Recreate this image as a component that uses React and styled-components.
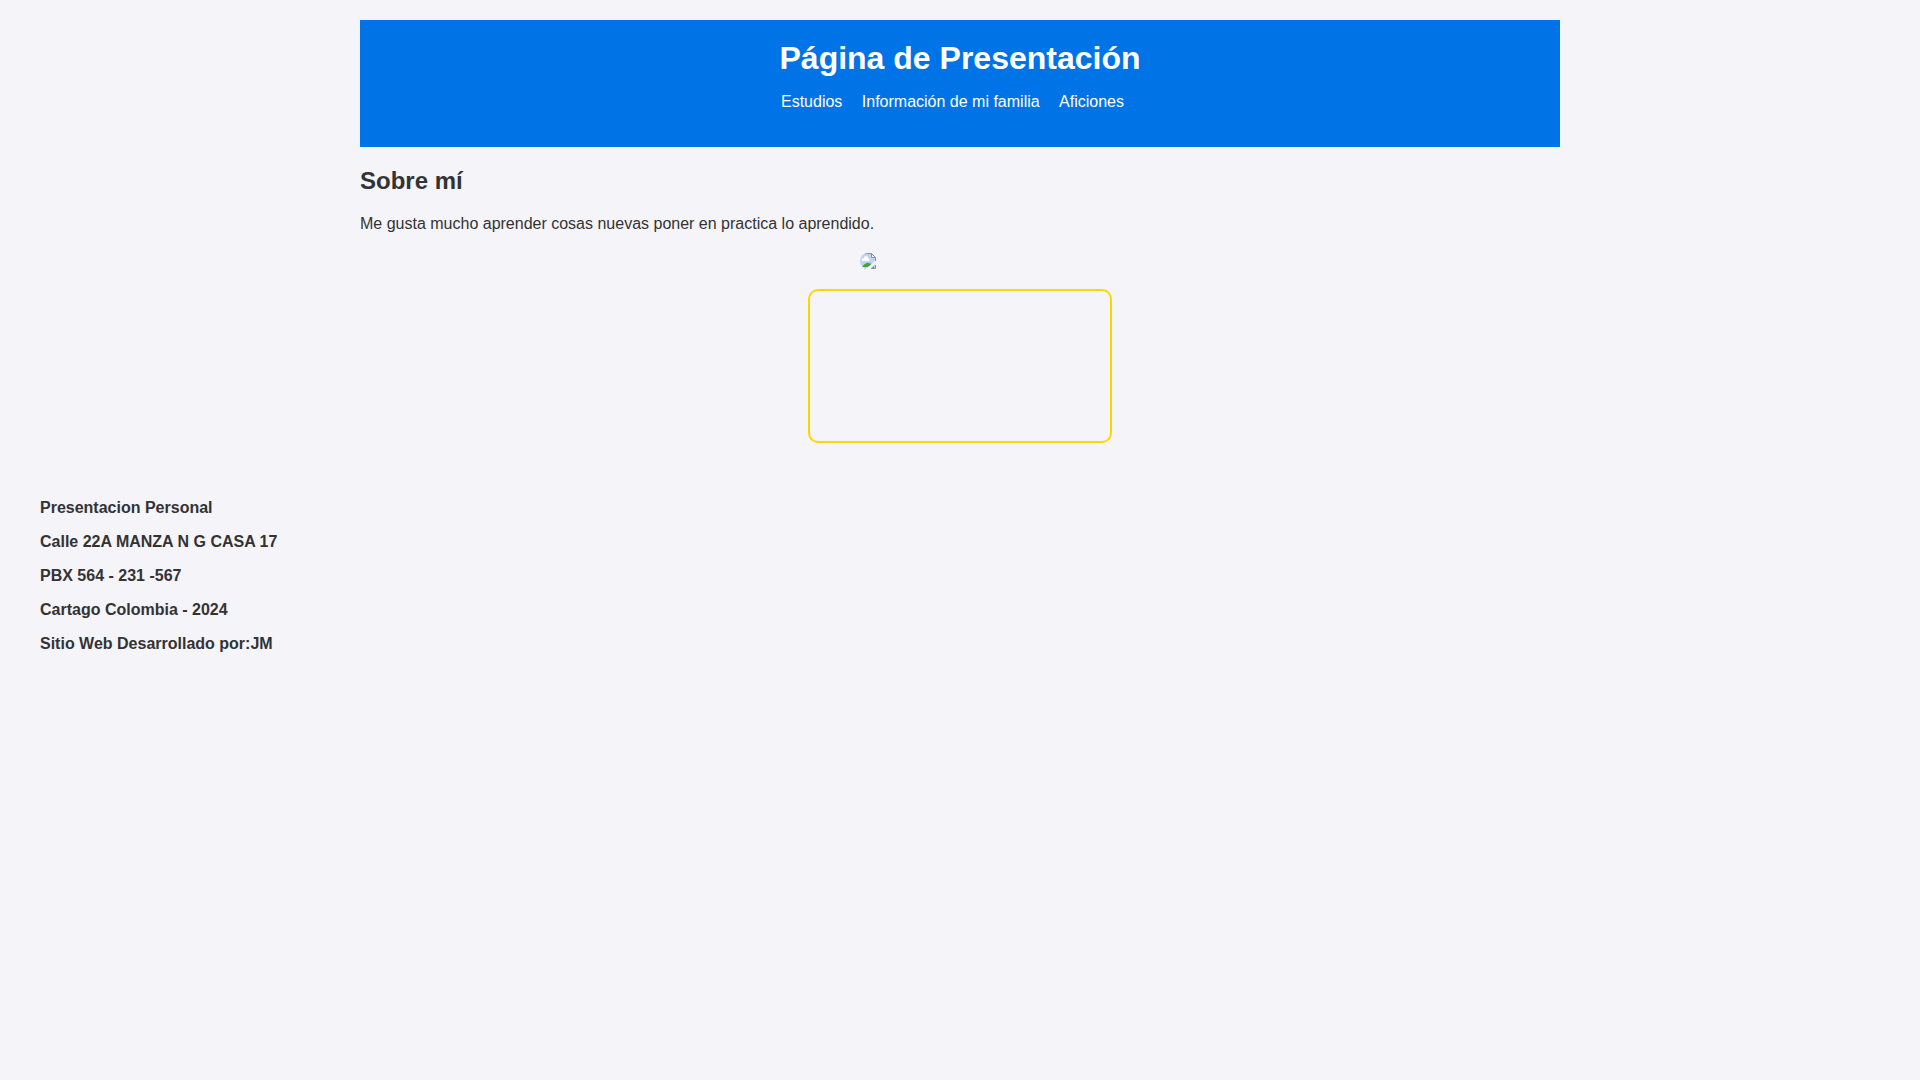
import React from "react";
import styled, { createGlobalStyle } from "styled-components";

const GlobalStyle = createGlobalStyle`
  body {
    margin: 0;
    background: #f4f4f9;
    color: #333;
    font-family: Arial, "Liberation Sans", sans-serif;
    font-size: 16px;
  }
`;

const Container = styled.div`
  max-width: 1200px;
  margin: 0 auto;
  padding: 20px;
`;

const Header = styled.header`
  background: #0073e6;
  color: #fff;
  padding: 20px;
  text-align: center;
`;

const Title = styled.h1`
  margin: 0;
  font-size: 32px;
  line-height: 36px;
`;

const NavList = styled.ul`
  list-style: none;
  margin: 16px 0;
  padding: 0;
  line-height: 19px;
`;

const NavItem = styled.li`
  display: inline;
  margin-right: 15px;
`;

const NavLink = styled.a`
  color: #fff;
  text-decoration: none;
`;

const Heading = styled.h2`
  margin: 20px 0;
  font-size: 24px;
  line-height: 28px;
`;

const Text = styled.p`
  margin: 0 0 20px;
  line-height: 18px;
`;

const Photo = styled.div`
  width: 200px;
  height: 16px;
  margin: 0 auto 20px;
  border-radius: 8px;
  overflow: hidden;
`;

const MissingImage = styled.svg`
  display: block;
`;

const VideoFrame = styled.section`
  box-sizing: border-box;
  width: 304px;
  height: 154px;
  margin: 0 auto;
  border: 2px solid #ffd700;
  border-radius: 10px;
`;

const Footer = styled.footer`
  padding: 20px 40px;
  font-weight: bold;
`;

const FooterLine = styled.p`
  margin: 16px 0;
  line-height: 18px;
`;

const links = ["Estudios", "Información de mi familia", "Aficiones"];
const details = [
  "Presentacion Personal",
  "Calle 22A MANZA N G CASA 17",
  "PBX 564 - 231 -567",
  "Cartago Colombia - 2024",
  "Sitio Web Desarrollado por:JM",
];

export default function App() {
  return (
    <>
      <GlobalStyle />
      <Container>
        <Header>
          <Title>Página de Presentación</Title>
          <nav>
            <NavList>
              {links.map((label) => (
                <React.Fragment key={label}>
                  <NavItem>
                    <NavLink href="#">{label}</NavLink>
                  </NavItem>{" "}
                </React.Fragment>
              ))}
            </NavList>
          </nav>
        </Header>
        <main>
          <Heading>Sobre mí</Heading>
          <Text>Me gusta mucho aprender cosas nuevas poner en practica lo aprendido.</Text>
          <Photo>
            <MissingImage width="16" height="16" viewBox="0 0 16 16" aria-hidden="true">
              <path d="M0 1h11l4 4v10H0z" fill="#c0d2f5" />
              <path d="M2 8a2 2 0 0 1 2-3 2 2 0 0 1 4 0 2 2 0 0 1 1 3z" fill="#fff" />
              <path d="M2 14c2-3 5-5 7-4l3 1-4 3z" fill="#43a832" />
              <path d="M15 8v3l-5 5H6z" fill="#f4f4f9" />
              <path d="M14 13v2h-2z" fill="#43a832" />
              <path d="M11 1v4h4z" fill="#fff" />
              <path d="M0 .5h11.5l4 4V8M11.5.5v4h4M15.5 12v3.5H11M6 15.5H0" fill="none" stroke="#909090" />
            </MissingImage>
          </Photo>
          <VideoFrame />
        </main>
      </Container>
      <Footer>
        {details.map((line) => (
          <FooterLine key={line}>{line}</FooterLine>
        ))}
      </Footer>
    </>
  );
}
